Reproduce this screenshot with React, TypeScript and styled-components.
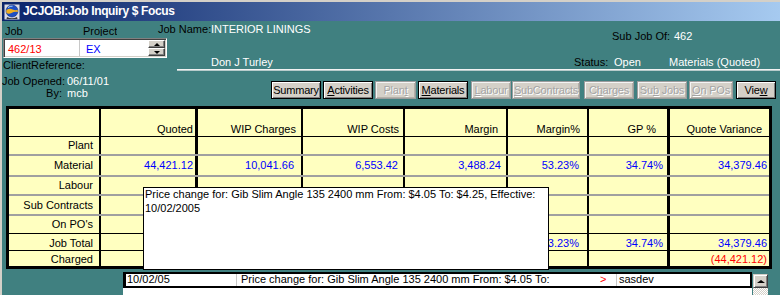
import React from "react";
import styled, { createGlobalStyle } from "styled-components";

const GlobalStyle = createGlobalStyle`
  html, body { margin: 0; padding: 0; background: #408080; }
  body { font-family: "Liberation Sans", Arial, sans-serif; font-size: 11px; color: #000; }
  #root { width: 780px; height: 295px; overflow: hidden; }
`;

const Window = styled.div`
  width: 780px;
  height: 295px;
  box-sizing: border-box;
  border-top: 2px solid #d4d0c8;
  border-left: 2px solid #d4d0c8;
  background: #408080;
  display: flex;
  flex-direction: column;
  overflow: hidden;
`;

const TitleBar = styled.div`
  flex: none;
  height: 19px;
  display: flex;
  align-items: center;
  gap: 3px;
  padding-left: 2px;
  background: linear-gradient(to right, #0a246a, #a6caf0);
  color: #fff;
  font-weight: bold;
  font-size: 12px;
  letter-spacing: -0.35px;
  line-height: 19px;
  white-space: nowrap;
`;

const Body = styled.div`
  position: relative;
  flex: 1;
  display: flex;
  flex-direction: column;
  min-height: 0;
`;

const HeaderGrid = styled.div`
  display: grid;
  grid-template-columns: 156px 19px 1fr;
  grid-template-rows: 17px 20px 14px 34px;
  line-height: 13px;
`;

const JobLabels = styled.div`
  grid-column: 1;
  grid-row: 1;
  display: flex;
  padding: 4px 0 0 3px;
`;

const Caption = styled.span<{ $w?: number; $pt?: number }>`
  color: #000;
  white-space: nowrap;
  flex: none;
  ${(p) => (p.$w ? `width: ${p.$w}px;` : "")}
  padding-top: ${(p) => p.$pt ?? 0}px;
`;

const ClippedCaption = styled.span<{ $w?: number }>`
  display: block;
  height: 11px;
  overflow: hidden;
  white-space: nowrap;
  ${(p) => (p.$w ? `width: ${p.$w}px;` : "")}
`;

const Value = styled.span<{ $w?: number; $pt?: number }>`
  color: #fff;
  white-space: nowrap;
  ${(p) => (p.$w ? `width: ${p.$w}px; flex: none;` : "flex: 1;")}
  padding-top: ${(p) => p.$pt ?? 0}px;
`;

const JobNameBar = styled.div`
  grid-column: 2 / 4;
  grid-row: 1;
  display: flex;
  align-items: flex-start;
`;

const SubJobGroup = styled.div`
  width: 168px;
  flex: none;
  display: flex;
  padding-top: 9px;
`;

const InputBox = styled.div`
  grid-column: 1 / 3;
  grid-row: 2;
  margin-left: 1px;
  width: 164px;
  height: 20px;
  box-sizing: border-box;
  border: 1px solid;
  border-color: #808080 #ffffff #ffffff #808080;
  box-shadow: inset 1px 1px 0 #404040, inset -1px -1px 0 #d4d0c8;
  padding: 1px;
  background: #fff;
  display: flex;
`;

const InputCell = styled.div<{ $w?: number; $pl: number; $color: string; $divider?: boolean }>`
  ${(p) => (p.$w ? `width: ${p.$w}px; flex: none;` : "flex: 1;")}
  box-sizing: border-box;
  padding: 2px 0 0 ${(p) => p.$pl}px;
  line-height: 14px;
  color: ${(p) => p.$color};
  ${(p) => (p.$divider ? "border-right: 1px solid #c8c8c8;" : "")}
`;

const Spinner = styled.div`
  width: 17px;
  flex: none;
  display: flex;
  flex-direction: column;
`;

const SpinButton = styled.div`
  flex: 1;
  box-sizing: border-box;
  background: #d4d0c8;
  border: 1px solid;
  border-color: #ffffff #404040 #404040 #ffffff;
  box-shadow: inset -1px -1px 0 #808080;
  display: flex;
  align-items: center;
  justify-content: center;
`;

const Arrow = styled.span<{ $dir: "up" | "down"; $size?: number }>`
  width: 0;
  height: 0;
  border-left: ${(p) => p.$size ?? 3}px solid transparent;
  border-right: ${(p) => p.$size ?? 3}px solid transparent;
  ${(p) =>
    p.$dir === "up"
      ? `border-bottom: ${Math.ceil((p.$size ?? 3) * 0.7)}px solid #000;`
      : `border-top: ${Math.ceil((p.$size ?? 3) * 0.7)}px solid #000;`}
`;

const ClientRef = styled.div`
  grid-column: 1;
  grid-row: 3;
  padding: 1px 0 0 1px;
  white-space: nowrap;
`;

const StatusBar = styled.div`
  grid-column: 3;
  grid-row: 2 / 4;
  align-self: start;
  height: 32px;
  box-sizing: border-box;
  border-bottom: 1px solid #f2f2f2;
  box-shadow: 0 1px 0 #b8cccc;
  display: flex;
  align-items: flex-end;
  padding-left: 34px;
`;

const StatusGroup = styled.div`
  width: 206px;
  flex: none;
  display: flex;
`;

const Opened = styled.div`
  grid-column: 1;
  grid-row: 4;
  display: grid;
  grid-template-columns: 60px auto;
  column-gap: 5px;
  align-content: start;
  padding-top: 3px;
  line-height: 12px;
`;

const OpenedLabel = styled.span`
  text-align: right;
  white-space: nowrap;
`;

const OpenedValue = styled.span`
  color: #fff;
`;

const ButtonBar = styled.div`
  grid-column: 2 / 4;
  grid-row: 4;
  display: flex;
  justify-content: flex-end;
  align-items: flex-start;
  padding: 9px 4px 0 0;
`;

const Button = styled.div<{ $w: number; $ml: number; $disabled?: boolean }>`
  width: ${(p) => p.$w}px;
  margin-left: ${(p) => p.$ml}px;
  height: 18px;
  box-sizing: border-box;
  flex: none;
  background: #d4d0c8;
  text-align: center;
  padding-top: 1px;
  line-height: 15px;
  white-space: nowrap;
  letter-spacing: -0.2px;
  overflow: hidden;
  ${(p) =>
    p.$disabled
      ? `border: 1px solid #9c9c9c;
         box-shadow: inset 1px 1px 0 #f4f4f4, inset -1px -1px 0 #b4b0a8;
         color: #a4a4a4;
         text-shadow: 1px 1px 0 #ffffff;`
      : `border: 1px solid #000;
         box-shadow: inset 1px 1px 0 #ffffff, inset -1px -1px 0 #808080;
         color: #000;`}
`;

const Table = styled.div`
  margin-left: 4px;
  width: 766px;
  height: 163px;
  box-sizing: border-box;
  border: 3px solid #000;
  background: #ffffc0;
  display: flex;
  flex-direction: column;
  flex: none;
`;

type LineKind = "black" | "gray" | "none";

const TRow = styled.div<{ $h: number; $line: LineKind }>`
  display: grid;
  grid-template-columns: 92px 97px 105px 102px 103px 81px 81px 99px;
  height: ${(p) => p.$h}px;
  box-sizing: border-box;
  flex: none;
  border-bottom: ${(p) =>
    p.$line === "black" ? "1px solid #000" : p.$line === "gray" ? "2px solid #a0a0a0" : "none"};
`;

const TCell = styled.div<{ $line: number; $pad: number; $align: "center" | "end"; $color: string }>`
  box-sizing: border-box;
  border-right: ${(p) => (p.$line ? `${p.$line}px solid #000` : "none")};
  padding-right: ${(p) => p.$pad}px;
  display: flex;
  justify-content: flex-end;
  align-items: ${(p) => (p.$align === "end" ? "flex-end" : "center")};
  line-height: 13px;
  white-space: nowrap;
  color: ${(p) => p.$color};
`;

const Tooltip = styled.div`
  position: absolute;
  left: 141px;
  top: 166px;
  width: 406px;
  height: 83px;
  box-sizing: border-box;
  border: 1px solid #000;
  background: #fff;
  padding-left: 1px;
  line-height: 13.5px;
  color: #000;
  white-space: nowrap;
`;

const BottomRow = styled.div`
  display: flex;
  margin-top: 3px;
  flex: 1;
  min-height: 0;
`;

const Spacer = styled.div`
  width: 121px;
  flex: none;
`;

const ListBox = styled.div`
  width: 629px;
  flex: none;
  background: #fff;
  display: flex;
  flex-direction: column;
`;

const SelRow = styled.div`
  height: 16px;
  box-sizing: border-box;
  border: 2px solid #000;
  display: flex;
  line-height: 11px;
  white-space: nowrap;
`;

const ListCell = styled.div<{ $w?: number; $pl: number; $divider?: boolean; $color?: string }>`
  ${(p) => (p.$w ? `width: ${p.$w}px; flex: none;` : "flex: 1;")}
  box-sizing: border-box;
  padding-left: ${(p) => p.$pl}px;
  display: flex;
  align-items: flex-start;
  color: ${(p) => p.$color ?? "#000"};
  overflow: hidden;
  ${(p) => (p.$divider ? "border-right: 1px solid #c8c8c8;" : "")}
`;

const Caret = styled.span`
  width: 1px;
  height: 12px;
  background: #000;
  margin-right: 1px;
  flex: none;
`;

const ScrollCol = styled.div`
  width: 16px;
  flex: none;
  display: flex;
  flex-direction: column;
  padding: 2px 0 0 1px;
  box-sizing: border-box;
`;

const ScrollButton = styled.div`
  height: 14px;
  flex: none;
  box-sizing: border-box;
  background: #d4d0c8;
  border: 1px solid;
  border-color: #d4d0c8 #404040 #404040 #d4d0c8;
  box-shadow: inset 1px 1px 0 #fff, inset -1px -1px 0 #808080;
  display: flex;
  align-items: center;
  justify-content: center;
`;

const ScrollTrack = styled.div`
  flex: 1;
  background: repeating-conic-gradient(#ffffff 0% 25%, #d4d0c8 0% 50%) 0 0 / 2px 2px;
`;

const GlobeIcon = () => (
  <svg width="16" height="16" viewBox="0 0 16 16">
    <rect x="0.5" y="0.5" width="15" height="15" fill="#dcdce4" />
    <circle cx="8" cy="7" r="6" fill="#1d4fc4" stroke="#0b2a80" strokeWidth="0.6" />
    <path d="M2.4 6 Q5.5 4 8.5 5.4 T13.6 5.8 L13.9 8 Q10.5 7.2 7.5 9 T2.2 8.6 Z" fill="#f0b020" />
    <path d="M4 3.6 Q6 2 8.6 2.1" stroke="#a8d4ff" strokeWidth="1" fill="none" />
    <path d="M3 13 Q8 15.5 13 13 L13.5 15 L2.5 15 Z" fill="#383838" />
  </svg>
);

const columns = [
  { line: 2, hpad: 6, dpad: 6 },
  { line: 3, hpad: 2, dpad: 2 },
  { line: 2, hpad: 5, dpad: 7 },
  { line: 2, hpad: 4, dpad: 5 },
  { line: 2, hpad: 8, dpad: 5 },
  { line: 2, hpad: 7, dpad: 8 },
  { line: 3, hpad: 11, dpad: 4 },
  { line: 0, hpad: 7, dpad: 2 },
];

const headers = ["", "Quoted", "WIP Charges", "WIP Costs", "Margin", "Margin%", "GP %", "Quote Variance"];

const totals = ["44,421.12", "10,041.66", "6,553.42", "3,488.24", "53.23%", "34.74%", "34,379.46"];

type RowDef = {
  label: string;
  h: number;
  line: LineKind;
  align: "center" | "end";
  values?: string[];
  color?: string;
};

const rows: RowDef[] = [
  { label: "Plant", h: 19, line: "gray", align: "center" },
  { label: "Material", h: 21, line: "gray", align: "center", values: totals },
  { label: "Labour", h: 19, line: "gray", align: "center" },
  { label: "Sub Contracts", h: 20, line: "gray", align: "center" },
  { label: "On PO's", h: 18, line: "black", align: "center" },
  { label: "Job Total", h: 17, line: "black", align: "end", values: totals },
  { label: "Charged", h: 15, line: "none", align: "end", values: ["", "", "", "", "", "", "(44,421.12)"], color: "#ff0000" },
];

const buttons: { label: React.ReactNode; w: number; ml: number; disabled?: boolean }[] = [
  { label: "Summary", w: 50, ml: 0 },
  { label: <><u>A</u>ctivities</>, w: 50, ml: 2 },
  { label: <>Plan<u>t</u></>, w: 41, ml: 2, disabled: true },
  { label: <><u>M</u>aterials</>, w: 50, ml: 2 },
  { label: <><u>L</u>abour</>, w: 40, ml: 3, disabled: true },
  { label: <><u>S</u>ubContracts</>, w: 68, ml: 1, disabled: true },
  { label: <>C<u>h</u>arges</>, w: 50, ml: 4, disabled: true },
  { label: <>Su<u>b</u> Jobs</>, w: 50, ml: 3, disabled: true },
  { label: <><u>O</u>n POs</>, w: 44, ml: 2, disabled: true },
  { label: <>Vie<u>w</u></>, w: 40, ml: 3 },
];

export default function App() {
  return (
    <>
      <GlobalStyle />
      <Window>
        <TitleBar>
          <GlobeIcon />
          <span>JCJOBI:Job Inquiry $ Focus</span>
        </TitleBar>
        <Body>
          <HeaderGrid>
            <JobLabels>
              <ClippedCaption $w={78}>Job</ClippedCaption>
              <ClippedCaption>Project</ClippedCaption>
            </JobLabels>
            <JobNameBar>
              <Caption $w={53} $pt={2}>Job Name:</Caption>
              <Value $pt={2}>INTERIOR LININGS</Value>
              <SubJobGroup>
                <Caption $w={62}>Sub Job Of:</Caption>
                <Value>462</Value>
              </SubJobGroup>
            </JobNameBar>
            <InputBox>
              <InputCell $w={75} $pl={3} $color="#ff0000" $divider>462/13</InputCell>
              <InputCell $pl={6} $color="#0000ff">EX</InputCell>
              <Spinner>
                <SpinButton><Arrow $dir="up" /></SpinButton>
                <SpinButton><Arrow $dir="down" /></SpinButton>
              </Spinner>
            </InputBox>
            <StatusBar>
              <Value>Don J Turley</Value>
              <StatusGroup>
                <Caption $w={40}>Status:</Caption>
                <Value $w={55}>Open</Value>
                <Value>Materials (Quoted)</Value>
              </StatusGroup>
            </StatusBar>
            <ClientRef>ClientReference:</ClientRef>
            <Opened>
              <OpenedLabel>Job Opened:</OpenedLabel>
              <OpenedValue>06/11/01</OpenedValue>
              <OpenedLabel>By:</OpenedLabel>
              <OpenedValue>mcb</OpenedValue>
            </Opened>
            <ButtonBar>
              {buttons.map((b, i) => (
                <Button key={i} $w={b.w} $ml={b.ml} $disabled={b.disabled}>
                  {b.label}
                </Button>
              ))}
            </ButtonBar>
          </HeaderGrid>

          <Table>
            <TRow $h={28} $line="black">
              {headers.map((h, i) => (
                <TCell key={i} $line={columns[i].line} $pad={columns[i].hpad} $align="end" $color="#000">
                  {h}
                </TCell>
              ))}
            </TRow>
            {rows.map((r) => (
              <TRow key={r.label} $h={r.h} $line={r.line}>
                <TCell $line={columns[0].line} $pad={columns[0].dpad} $align={r.align} $color="#000">
                  {r.label}
                </TCell>
                {columns.slice(1).map((c, i) => (
                  <TCell key={i} $line={c.line} $pad={c.dpad} $align={r.align} $color={r.color ?? "#0000ff"}>
                    {r.values ? r.values[i] : ""}
                  </TCell>
                ))}
              </TRow>
            ))}
          </Table>

          <BottomRow>
            <Spacer />
            <ListBox>
              <SelRow>
                <ListCell $w={112} $pl={0} $divider>
                  <Caret />
                  10/02/05
                </ListCell>
                <ListCell $w={360} $pl={4}>
                  Price change for: Gib Slim Angle 135 2400 mm From: $4.05 To:
                </ListCell>
                <ListCell $w={20} $pl={3} $divider $color="#ff0000">&gt;</ListCell>
                <ListCell $pl={2}>sasdev</ListCell>
              </SelRow>
            </ListBox>
            <ScrollCol>
              <ScrollButton><Arrow $dir="up" $size={4} /></ScrollButton>
              <ScrollTrack />
            </ScrollCol>
          </BottomRow>

          <Tooltip>
            Price change for: Gib Slim Angle 135 2400 mm From: $4.05 To: $4.25, Effective:
            <br />
            10/02/2005
          </Tooltip>
        </Body>
      </Window>
    </>
  );
}
